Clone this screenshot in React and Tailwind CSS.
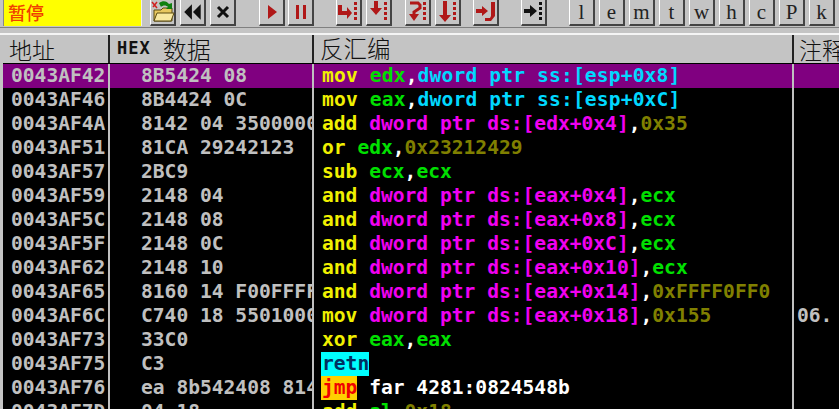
const Y = "text-[#f0f000]";
const G = "text-[#00e000]";
const M = "text-[#f000f0]";
const C = "text-[#00d8ff]";
const O = "text-[#808000]";
const W = "text-white";

const memOp = (reg, off, tail, tailColor) => [
  ["dword ptr ds:[" + reg + "+" + off + "]", M],
  [",", W],
  [tail, tailColor],
];

const rows = [
  { addr: "0043AF42", hex: "8B5424 08", mnem: "mov", ops: [["edx", G], [",", W], ["dword ptr ss:[esp+0x8]", C]], selected: true, wide: true },
  { addr: "0043AF46", hex: "8B4424 0C", mnem: "mov", ops: [["eax", G], [",", W], ["dword ptr ss:[esp+0xC]", C]], wide: true },
  { addr: "0043AF4A", hex: "8142 04 35000000", mnem: "add", ops: memOp("edx", "0x4", "0x35", O) },
  { addr: "0043AF51", hex: "81CA 29242123", mnem: "or", ops: [["edx", G], [",", W], ["0x23212429", O]] },
  { addr: "0043AF57", hex: "2BC9", mnem: "sub", ops: [["ecx", G], [",", W], ["ecx", G]] },
  { addr: "0043AF59", hex: "2148 04", mnem: "and", ops: memOp("eax", "0x4", "ecx", G) },
  { addr: "0043AF5C", hex: "2148 08", mnem: "and", ops: memOp("eax", "0x8", "ecx", G) },
  { addr: "0043AF5F", hex: "2148 0C", mnem: "and", ops: memOp("eax", "0xC", "ecx", G) },
  { addr: "0043AF62", hex: "2148 10", mnem: "and", ops: memOp("eax", "0x10", "ecx", G) },
  { addr: "0043AF65", hex: "8160 14 F00FFFFF", mnem: "and", ops: memOp("eax", "0x14", "0xFFFF0FF0", O) },
  { addr: "0043AF6C", hex: "C740 18 55010000", mnem: "mov", ops: memOp("eax", "0x18", "0x155", O), note: "06." },
  { addr: "0043AF73", hex: "33C0", mnem: "xor", ops: [["eax", G], [",", W], ["eax", G]] },
  { addr: "0043AF75", hex: "C3", mnem: "retn", badge: "bg-[#00ffff] text-[#003060]", ops: [] },
  { addr: "0043AF76", hex: "ea 8b542408 8144", mnem: "jmp", badge: "bg-[#ffd000] text-[#f00000]", ops: [["far 4281:0824548b", W]] },
  { addr: "0043AF7D", hex: "04 18", mnem: "add", ops: [["al", G], [",", W], ["0x18", O]] },
];

const RED = "#b01818";
const DOTS = "M17 1h3v3h-3zM17 6h3v3h-3zM17 11h3v3h-3zM17 16h3v3h-3z";

function Btn({ children, className = "" }) {
  return (
    <div className={"h-[26px] w-[26px] shrink-0 bg-[#c4c4c4] border-b-2 border-r-2 border-b-[#444] border-r-[#444] border-l border-l-white flex items-center justify-center " + className}>
      {children}
    </div>
  );
}

const Icon = ({ children }) => <svg width="23" height="23" viewBox="0 0 23 23" className="shrink-0">{children}</svg>;

function HeadCell({ children, className = "", last }) {
  return (
    <div className={"font-['Noto_Sans_CJK_SC',sans-serif] font-light h-[28px] flex items-center whitespace-nowrap " + (last ? "" : "border-r-2 border-[#222] ") + className}>
      {children}
    </div>
  );
}

export default function App() {
  return (
    <div className="w-[839px] h-[409px] overflow-hidden bg-[#c4c4c4] font-['DejaVu_Sans_Mono',monospace]">
      <div className="h-[33px]">
        <div className="h-[28px] flex items-start border-b border-[#808080]">
          <div className="ml-[3px] w-[138px] h-[26px] bg-[#ffff00] border-l border-[#888] pl-[4px] text-[#f04000] text-[18px] leading-[24px] font-medium font-['Noto_Sans_CJK_SC',sans-serif] shrink-0">
            暂停
          </div>
          <div className="w-[1px] h-[26px] bg-[#eee]" />
          <div className="flex items-start ml-[8px]">
            <Btn>
              <svg width="24" height="24" viewBox="0 0 24 24" className="shrink-0">
                <path d="M3 10h7l2-2h9v13H3z" fill="#e8c860" stroke="#5a4a10" />
                <path d="M3 21l3-8h17l-3 8z" fill="#f8e8a0" stroke="#5a4a10" />
                <path d="M8 3c4-3 8-2 10 1l3-1v6h-6l2-2c-2-2-5-2-7 0z" fill="#108010" />
                <path d="M1 2l5 6M6 2L2 7" stroke="#d02020" strokeWidth="1.500" />
              </svg>
            </Btn>
            <Btn className="ml-[4px]">
              <svg width="22" height="20" viewBox="0 0 20 18" className="shrink-0"><path d="M9 2v14L2 9zM17 2v14l-7-7z" fill="#111" /></svg>
            </Btn>
            <Btn className="ml-[4px]">
              <svg width="18" height="18" viewBox="0 0 18 18"><path d="M4 4l10 10M14 4L4 14" stroke="#111" strokeWidth="3" /></svg>
            </Btn>
            <Btn className="ml-[23px]">
              <svg width="18" height="20" viewBox="0 0 18 20"><path d="M5 3v14l9-7z" fill={RED} /></svg>
            </Btn>
            <Btn className="ml-[3px]">
              <svg width="18" height="20" viewBox="0 0 18 20"><path d="M4 3h3v14H4zM11 3h3v14h-3z" fill={RED} /></svg>
            </Btn>
            <Btn className="ml-[22px]">
              <Icon><path d={DOTS} fill={RED} /><path d="M1 4h4v6h5V6l5 6-5 6v-4H1z" fill={RED} /></Icon>
            </Btn>
            <Btn className="ml-[4px]">
              <Icon><path d={DOTS} fill={RED} /><path d="M7 0h4v7h4l-6 7-6-7h4z" fill={RED} /></Icon>
            </Btn>
            <Btn className="ml-[13px]">
              <Icon>
                <path d={DOTS} fill={RED} />
                <path d="M4 2h8l2 2v3l-6 4v3" fill="none" stroke={RED} strokeWidth="3" />
                <path d="M3 13h10l-5 7z" fill={RED} />
              </Icon>
            </Btn>
            <Btn className="ml-[4px]">
              <Icon><path d={DOTS} fill={RED} /><path d="M7 0h4v14h4l-6 7-6-7h4z" fill={RED} /></Icon>
            </Btn>
            <Btn className="ml-[12px]">
              <Icon><path d="M2 8h6V5l6 5-6 5v-3H2zM17 1h4v14l-4 5h-6v-3h5l1-2z" fill={RED} /></Icon>
            </Btn>
            <Btn className="ml-[22px]">
              <Icon><path d={DOTS} fill="#111" /><path d="M2 8h6V4l7 6-7 6v-4H2z" fill="#111" /></Icon>
            </Btn>
            <div className="flex gap-[4px] ml-[22px]">
              {["l", "e", "m", "t", "w", "h", "c", "P", "k"].map((ch) => (
                <Btn key={ch}>
                  <span className="font-['Liberation_Serif',serif] text-[21px] leading-none text-[#222]">{ch}</span>
                </Btn>
              ))}
            </div>
          </div>
        </div>
      </div>

      <div className="h-[30px] border-t-2 border-[#f4f4f4] grid grid-cols-[110px_204px_480px_45px] text-[#111]">
        <HeadCell className="text-[23px] pl-[9px]">地址</HeadCell>
        <HeadCell className="text-[24px] pl-[7px]">
          <span className="font-bold text-[17px] tracking-[1px] mr-[12px] font-['DejaVu_Sans_Mono',monospace]">HEX</span>数据
        </HeadCell>
        <HeadCell className="text-[23.500px] pl-[6px]">反汇编</HeadCell>
        <HeadCell last className="text-[23px] pl-[5px]">注释</HeadCell>
      </div>

      <div className="ml-[3px] bg-black border-t border-black">
        {rows.map((r) => (
          <div
            key={r.addr}
            className={"h-[24px] grid grid-cols-[107px_204px_480px_45px] text-[19.600px] leading-[24px] font-bold whitespace-pre " + (r.selected ? "bg-[#800080]" : "")}
          >
            <div className="pl-[8px] text-[#c0c0c0] border-r-2 border-[#c0c0c0] overflow-hidden">{r.addr}</div>
            <div className="pl-[31px] text-[#c0c0c0] border-r-2 border-[#c0c0c0] overflow-hidden">{r.hex}</div>
            <div className={"pl-[8px] border-r-2 border-[#c0c0c0] overflow-hidden " + (r.wide ? "tracking-[0.150px]" : "")}>
              {r.badge ? (
                <span className={"inline-block h-[24px] -ml-[1px] pl-[1px] " + r.badge}>{r.mnem}</span>
              ) : (
                <span className={Y}>{r.mnem}</span>
              )}
              {r.ops.length > 0 && " "}
              {r.ops.map(([t, c], i) => (
                <span key={i} className={c}>{t}</span>
              ))}
            </div>
            <div className="pl-[3px] text-[#c0c0c0] overflow-hidden">{r.note}</div>
          </div>
        ))}
      </div>
    </div>
  );
}
